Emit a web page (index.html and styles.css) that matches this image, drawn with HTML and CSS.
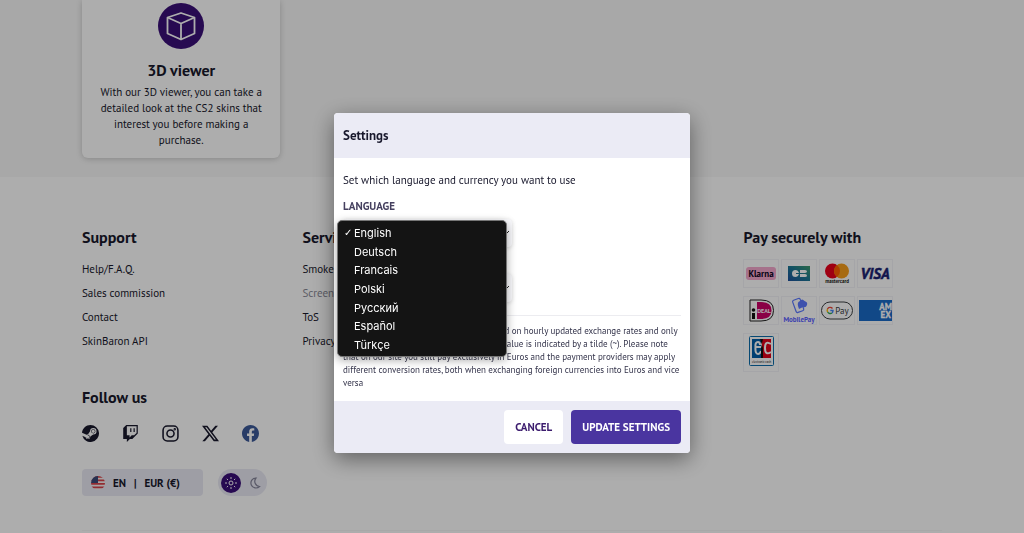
FILE: index.html
```
<!DOCTYPE html>
<html lang="en">

<head>
    <meta charset="UTF-8">
    <meta name="viewport" content="width=device-width, initial-scale=1.0">
    <title>SkinBaron - Settings</title>
    <link rel="stylesheet" href="styles.css">
</head>

<body>
    <!-- features -->
    <main class="features">
        <div class="container grid">
            <article class="card">
                <span class="card_icon">
                    <svg viewBox="0 0 46 46" width="46" height="46" fill="none" stroke="#fff" stroke-width="1.8" stroke-linejoin="round">
                        <path d="M23 10L36.500 14.500V30.500L23 36.500L9.500 30.500V14.500Z" />
                        <path d="M9.500 14.500L23 20.500L36.500 14.500M23 20.500V36.500" />
                    </svg>
                </span>
                <h2>3D viewer</h2>
                <p>With our 3D viewer, you can take a detailed look at the CS2 skins that interest you before making a purchase.</p>
            </article>
        </div>
    </main>

    <!-- footer -->
    <footer class="footer">
        <div class="container">
            <div class="grid footer_cols">
                <nav class="col">
                    <h3>Support</h3>
                    <ul>
                        <li><a href="#">Help/F.A.Q.</a></li>
                        <li><a href="#">Sales commission</a></li>
                        <li><a href="#">Contact</a></li>
                        <li><a href="#">SkinBaron API</a></li>
                    </ul>
                </nav>
                <nav class="col">
                    <h3>Service</h3>
                    <ul>
                        <li><a href="#">Smoke</a></li>
                        <li><a href="#" class="muted">Screen</a></li>
                        <li><a href="#">ToS</a></li>
                        <li><a href="#">Privacy</a></li>
                    </ul>
                </nav>
                <div class="col col_pay">
                    <h3>Pay securely with</h3>
                    <ul class="payments">
                        <li>
                            <svg viewBox="0 0 34 27" role="img" aria-label="Klarna">
                                <rect x="2" y="7" width="30" height="13" rx="3" fill="#f5a8cd" />
                                <text x="17" y="17" text-anchor="middle" font-size="9" font-weight="700" fill="#0b051d">Klarna</text>
                            </svg>
                        </li>
                        <li>
                            <svg viewBox="0 0 34 27" role="img" aria-label="Carte Bancaire">
                                <defs>
                                    <linearGradient id="cb" x1="0" y1="1" x2="1" y2="0">
                                        <stop offset="0" stop-color="#1c4f9c" />
                                        <stop offset=".5" stop-color="#1b7795" />
                                        <stop offset="1" stop-color="#3f9b6b" />
                                    </linearGradient>
                                </defs>
                                <rect x="6" y="6" width="22" height="15" fill="url(#cb)" />
                                <path d="M17 13H14V14H17Q16 17 13.500 17Q10 17 10 13.500Q10 10 13.500 10Q16 10 17 13ZM18 10H23Q25 10 25 11.600Q25 13 23 13H18ZM18 14H23Q25 14 25 15.500Q25 17 23 17H18Z" fill="#fff" />
                            </svg>
                        </li>
                        <li>
                            <svg viewBox="0 0 34 27" role="img" aria-label="Mastercard">
                                <circle cx="12.500" cy="11" r="7.500" fill="#eb001b" />
                                <circle cx="21.500" cy="11" r="7.500" fill="#f79e1b" />
                                <path d="M17 5Q20 7.500 20 11T17 17Q14 14.500 14 11T17 5Z" fill="#ff5f00" />
                                <text x="17" y="23" text-anchor="middle" font-size="5" font-weight="700" fill="#231f20">mastercard</text>
                            </svg>
                        </li>
                        <li>
                            <svg viewBox="0 0 34 27" role="img" aria-label="Visa">
                                <text x="17" y="19" text-anchor="middle" font-size="15" font-weight="900" font-style="italic" fill="#1a1f71" stroke="#1a1f71" stroke-width=".5">VISA</text>
                            </svg>
                        </li>
                        <li>
                            <svg viewBox="0 0 34 27" role="img" aria-label="iDEAL">
                                <path d="M6 3H17Q29.500 3 29.500 13.500Q29.500 24 17 24H6Z" fill="#fff" stroke="#222" />
                                <path d="M13 5H17Q27.500 5 27.500 13.500Q27.500 22 17 22H13Z" fill="#cc0066" />
                                <circle cx="9.500" cy="13" r="1.800" fill="#111" />
                                <path d="M8 16H11V22H8Z" fill="#111" />
                                <text x="20" y="16" text-anchor="middle" font-size="6" font-weight="700" fill="#fff">DEAL</text>
                            </svg>
                        </li>
                        <li>
                            <svg viewBox="0 0 34 27" role="img" aria-label="MobilePay">
                                <g fill="none" stroke="#5a78ff" stroke-width="1.200">
                                    <rect x="12" y="2" width="8" height="13" rx="1.500" transform="rotate(-20 16 8)" />
                                </g>
                                <path d="M16 9Q15 5 18 4Q20 1 22.500 4Q26 5 25 8Q24 11 21 10L17 12Z" fill="#5a78ff" />
                                <text x="17" y="25" text-anchor="middle" font-size="7" font-weight="700" fill="#5a60ff">MobilePay</text>
                            </svg>
                        </li>
                        <li>
                            <svg viewBox="0 0 34 27" role="img" aria-label="Google Pay">
                                <rect x="1.500" y="5" width="31" height="17" rx="8.500" fill="#fff" stroke="#3c4043" />
                                <g fill="none" stroke-width="1.400">
                                    <path d="M12.500 11.500A3 3 0 0 0 7.500 12" stroke="#ea4335" />
                                    <path d="M7.500 12A3 3 0 0 0 7.700 15" stroke="#fbbc04" />
                                    <path d="M7.700 15A3 3 0 0 0 12 16" stroke="#34a853" />
                                    <path d="M12 16Q13 15 13 13.500H10.300" stroke="#4285f4" />
                                </g>
                                <text x="22" y="17" text-anchor="middle" font-size="9" fill="#3c4043">Pay</text>
                            </svg>
                        </li>
                        <li>
                            <svg viewBox="0 0 34 27" role="img" aria-label="American Express">
                                <rect x="1" y="3" width="33" height="21" fill="#1a6ac8" />
                                <text x="34" y="13" text-anchor="end" font-size="9" font-weight="900" fill="#fff" stroke="#fff" stroke-width=".3">AM</text>
                                <text x="33" y="21" text-anchor="end" font-size="9" font-weight="900" fill="#fff" stroke="#fff" stroke-width=".3">EX</text>
                            </svg>
                        </li>
                        <li class="tall">
                            <svg viewBox="0 0 34 37" role="img" aria-label="Electronic cash">
                                <rect x="5.500" y="2.500" width="24" height="29" rx="1" fill="#fff" stroke="#0b6cab" />
                                <path d="M8 5H17V24H8Z" fill="#005ea8" />
                                <path d="M18 5H27V24H18Z" fill="#e2001a" />
                                <path d="M17 13H11.500Q11 8 14 8Q16 8 16 11M11.500 13Q11 20 14 20Q16 20 17 17M27 10Q21 6 21 14Q21 22 27 18" fill="none" stroke="#fff" stroke-width="2" />
                                <path d="M16 5H19L17 14V24H19V14Z" fill="#111" />
                                <text x="17.500" y="29" text-anchor="middle" font-size="3" fill="#111">electronic cash</text>
                            </svg>
                        </li>
                    </ul>
                </div>
            </div>

            <section class="follow">
                <h3>Follow us</h3>
                <div class="social">
                    <a href="#" aria-label="Steam">
                        <svg viewBox="0 0 24 24">
                            <path fill="#18182c" d="M11.980 0C5.680 0 .510 4.860.020 11.040l6.430 2.660a3.400 3.400 0 0 1 1.920-.590h.190l2.860-4.140v-.060a4.530 4.530 0 1 1 4.530 4.530h-.110l-4.070 2.910v.160a3.390 3.390 0 0 1-6.720.660L.450 15.270A12 12 0 1 0 11.980 0zM7.540 18.210l-1.470-.610a2.550 2.550 0 1 0 1.390-3.470l1.520.630a1.870 1.870 0 1 1-1.440 3.450zm11.420-9.300a3.020 3.020 0 1 0-6.040 0 3.020 3.020 0 0 0 6.040 0zm-5.280 0a2.270 2.270 0 1 1 4.540 0 2.270 2.270 0 0 1-4.540 0z" />
                        </svg>
                    </a>
                    <a href="#" aria-label="Twitch">
                        <svg viewBox="0 0 24 24">
                            <path fill="#18182c" d="M11.570 4.710h1.720v5.150h-1.720zm4.720 0H18v5.150h-1.710zM6 0 1.710 4.290v15.420h5.150V24l4.280-4.290h3.430L22.290 12V0zm14.570 11.140-3.430 3.430h-3.430l-3 3v-3H6.860V1.710h13.710z" />
                        </svg>
                    </a>
                    <a href="#" aria-label="Instagram">
                        <svg viewBox="0 0 24 24" fill="none" stroke="#18182c" stroke-width="2.200">
                            <rect x="1.500" y="1.500" width="21" height="21" rx="6" />
                            <circle cx="12" cy="12" r="5" />
                            <circle cx="18" cy="6" r=".6" />
                        </svg>
                    </a>
                    <a href="#" aria-label="X">
                        <svg viewBox="0 0 24 24">
                            <path fill="#18182c" d="M18.900 1.150h3.680l-8.040 9.190L24 22.850h-7.410l-5.800-7.580-6.640 7.580H.470l8.600-9.830L0 1.150h7.590l5.240 6.930zM17.610 20.640h2.040L6.490 3.240H4.300z" />
                        </svg>
                    </a>
                    <a href="#" aria-label="Facebook">
                        <svg viewBox="0 0 24 24">
                            <path fill="#3b5998" d="M24 12.070C24 5.450 18.630.070 12 .070S0 5.450 0 12.070c0 5.990 4.390 10.950 10.130 11.850v-8.380H7.080v-3.470h3.050V9.430c0-3.010 1.790-4.670 4.530-4.670 1.310 0 2.690.230 2.690.230v2.950h-1.510c-1.490 0-1.960.930-1.960 1.870v2.260h3.330l-.530 3.470h-2.800v8.380C19.610 23.020 24 18.060 24 12.070z" />
                        </svg>
                    </a>
                </div>
                <div class="prefs">
                    <button type="button" class="locale">
                        <svg viewBox="0 0 16 16" width="14" height="14">
                            <clipPath id="flag"><circle cx="8" cy="8" r="8" /></clipPath>
                            <g clip-path="url(#flag)">
                                <path fill="#f3f0f0" d="M0 0H16V16H0Z" />
                                <path fill="#d8424a" d="M0 0H16V2H0ZM0 4H16V6H0ZM0 8H16V10H0ZM0 12H16V14H0Z" />
                                <path fill="#3c4a78" d="M0 0H8V8H0Z" />
                            </g>
                        </svg>
                        <span>EN</span>
                        <span>|</span>
                        <span>EUR (€)</span>
                    </button>
                    <label class="theme">
                        <input type="checkbox" aria-label="Dark mode">
                        <span class="theme_sun">
                            <svg viewBox="0 0 12 12" width="12" height="12" fill="none" stroke="#fff">
                                <circle cx="6" cy="6" r="2" />
                                <path d="M6 0V2M6 10V12M0 6H2M10 6H12M1.800 1.800L3 3M9 9L10.200 10.200M1.800 10.200L3 9M9 3L10.200 1.800" />
                            </svg>
                        </span>
                        <svg class="theme_moon" viewBox="0 0 12 12" width="12" height="12" fill="none" stroke="#85859a" stroke-width="1.200">
                            <path d="M7 1A5 5 0 1 0 10.500 9.500A5.200 5.200 0 0 1 7 1Z" />
                        </svg>
                    </label>
                </div>
            </section>
        </div>
    </footer>

    <!-- settings dialog -->
    <div class="overlay">
        <form class="modal" role="dialog" aria-labelledby="modal-title">
            <header class="modal_head">
                <h2 id="modal-title">Settings</h2>
            </header>
            <div class="modal_body">
                <p class="intro">Set which language and currency you want to use</p>
                <div class="field">
                    <label for="language">Language</label>
                    <select id="language">
                        <option>English</option>
                        <option>Deutsch</option>
                        <option>Francais</option>
                        <option>Polski</option>
                        <option>Русский</option>
                        <option>Español</option>
                        <option>Türkçe</option>
                    </select>
                    <!-- open list of languages -->
                    <ul class="menu" role="listbox" aria-label="Language">
                        <li role="option" aria-selected="true">English</li>
                        <li role="option">Deutsch</li>
                        <li role="option">Francais</li>
                        <li role="option">Polski</li>
                        <li role="option">Русский</li>
                        <li role="option">Español</li>
                        <li role="option">Türkçe</li>
                    </ul>
                </div>
                <div class="field">
                    <label for="currency">Currency</label>
                    <select id="currency">
                        <option>EUR (€)</option>
                    </select>
                </div>
                <p class="note">The converted prices shown here are based on hourly updated exchange rates and only an approximation. Such an approximated value is indicated by a tilde (~). Please note that on our site you still pay exclusively in Euros and the payment providers may apply different conversion rates, both when exchanging foreign currencies into Euros and vice versa</p>
            </div>
            <div class="modal_foot">
                <button type="button" class="btn">Cancel</button>
                <button type="submit" class="btn btn_primary">Update settings</button>
            </div>
        </form>
    </div>
</body>

</html>
```

FILE: styles.css
```
* {
    margin: 0;
    padding: 0;
    box-sizing: border-box;
}

body {
    font-family: "PT Sans", Lato, "Noto Sans", sans-serif;
    font-size: 11px;
    line-height: 16px;
    color: #18182c;
    background: #fff;
    overflow: hidden;
}

ul {
    list-style: none;
}

a {
    color: inherit;
    text-decoration: none;
}

button,
select {
    font: inherit;
    color: inherit;
    border: none;
    cursor: pointer;
}

.container {
    width: 84%;
    margin: 0 auto;
}

.grid {
    display: grid;
    grid-template-columns: repeat(4, 1fr);
    column-gap: 22px;
}

/* features */
.features {
    background: #f8f8f8;
    padding-bottom: 19px;
}

.card {
    padding: 3px 14px 10px;
    text-align: center;
    background: #fff;
    border-radius: 0 0 6px 6px;
    box-shadow: 0 1px 6px rgba(0, 0, 0, 0.2);
}

.card_icon {
    display: block;
    width: 46px;
    height: 46px;
    margin: 0 auto 10px;
    border-radius: 50%;
    background: #3a0f78;
}

.card h2 {
    font-size: 16px;
    line-height: 22px;
    margin-bottom: 3px;
}

/* footer */
.footer {
    padding-top: 48px;
}

.footer .container {
    border-bottom: 1px solid #f8f8f8;
    padding-bottom: 34px;
}

.footer h3 {
    font-size: 16px;
    line-height: 24px;
}

.col ul {
    margin-top: 8px;
}

.col li {
    line-height: 24px;
}

.col_pay {
    grid-column: 4;
}

.muted {
    color: #8a8a96;
}

.col .payments {
    display: flex;
    flex-wrap: wrap;
    gap: 10px 4px;
    width: 160px;
    margin-top: 11px;
}

.payments li {
    width: 34px;
    height: 27px;
    outline: 1px solid #f4f4f8;
}

.payments .tall {
    height: 37px;
}

.payments svg {
    display: block;
    width: 100%;
    height: 100%;
}

.follow {
    margin-top: 14px;
}

.social {
    display: flex;
    gap: 23px;
    margin-top: 16px;
}

.social svg {
    display: block;
    width: 17px;
    height: 17px;
}

.prefs {
    display: flex;
    gap: 15px;
    margin-top: 27px;
}

.locale {
    display: flex;
    align-items: center;
    gap: 8px;
    width: 121px;
    height: 27px;
    padding: 0 9px;
    font-weight: bold;
    border-radius: 4px;
    background: #e9e9f4;
}

.theme {
    display: flex;
    align-items: center;
    gap: 8px;
    width: 49px;
    height: 27px;
    padding: 0 3px;
    border-radius: 14px;
    background: #e9e9f4;
    cursor: pointer;
}

.theme input {
    position: absolute;
    opacity: 0;
}

.theme_sun {
    display: flex;
    align-items: center;
    justify-content: center;
    width: 20px;
    height: 20px;
    border-radius: 50%;
    background: #3a0f78;
}

/* settings dialog */
.overlay {
    position: fixed;
    inset: 0;
    display: flex;
    justify-content: center;
    align-items: flex-start;
    padding-top: 113px;
    background: rgba(0, 0, 0, 0.32);
}

.modal {
    width: 356px;
    border-radius: 4px;
    background: #fff;
    box-shadow: 0 6px 22px rgba(0, 0, 0, 0.45);
}

.modal_head {
    padding: 15px 9px 14px;
    border-radius: 4px 4px 0 0;
    background: #ebebf5;
}

.modal_head h2 {
    font-size: 13px;
    line-height: 16px;
}

.modal_body {
    padding: 14px 9px 12px;
}

.field {
    position: relative;
    margin-top: 10px;
}

.field + .field {
    margin-top: 6px;
}

.field label {
    display: block;
    font-weight: bold;
    text-transform: uppercase;
    color: #45405f;
}

.field select {
    appearance: none;
    display: block;
    width: 169px;
    height: 28px;
    margin-top: 5px;
    padding: 0 8px;
    border-radius: 4px;
    background: #f8f8fb url("data:image/svg+xml,%3Csvg xmlns='http://www.w3.org/2000/svg' width='8' height='6' fill='none' stroke='%23222' %3E%3Cpath d='M1 1L4 4L7 1'/%3E%3C/svg%3E") no-repeat right 2px center;
    box-shadow: 0 1px 4px rgba(0, 0, 0, 0.15);
}

.menu {
    position: absolute;
    top: 22px;
    left: -6px;
    z-index: 1;
    display: flex;
    flex-direction: column;
    width: 170px;
    height: 137px;
    padding: 3px 0 2px;
    font-family: Inter, "Noto Sans", sans-serif;
    font-size: 11px;
    color: #fff;
    border: 1px solid #777;
    border-radius: 5px;
    background: #141414;
    box-shadow: 0 3px 10px rgba(0, 0, 0, 0.35);
}

.menu li {
    display: flex;
    flex: 1;
    align-items: center;
    padding-left: 16px;
}

.menu li[aria-selected="true"] {
    padding-left: 6px;
}

.menu li[aria-selected="true"]::before {
    content: "✓";
    width: 10px;
    font-family: "DejaVu Sans", sans-serif;
    font-size: 10px;
    font-weight: bold;
}

.note {
    margin-top: 13px;
    padding-top: 8px;
    font-size: 9px;
    line-height: 13px;
    color: #33334a;
    border-top: 1px solid #ececf0;
}

.modal_foot {
    display: flex;
    justify-content: flex-end;
    gap: 8px;
    padding: 9px;
    border-radius: 0 0 4px 4px;
    background: #ebebf5;
}

.btn {
    height: 34px;
    padding: 0 11px;
    font-weight: bold;
    text-transform: uppercase;
    color: #3c1c6e;
    border-radius: 4px;
    background: #fff;
}

.btn_primary {
    color: #fff;
    background: #4a35a0;
}
```
